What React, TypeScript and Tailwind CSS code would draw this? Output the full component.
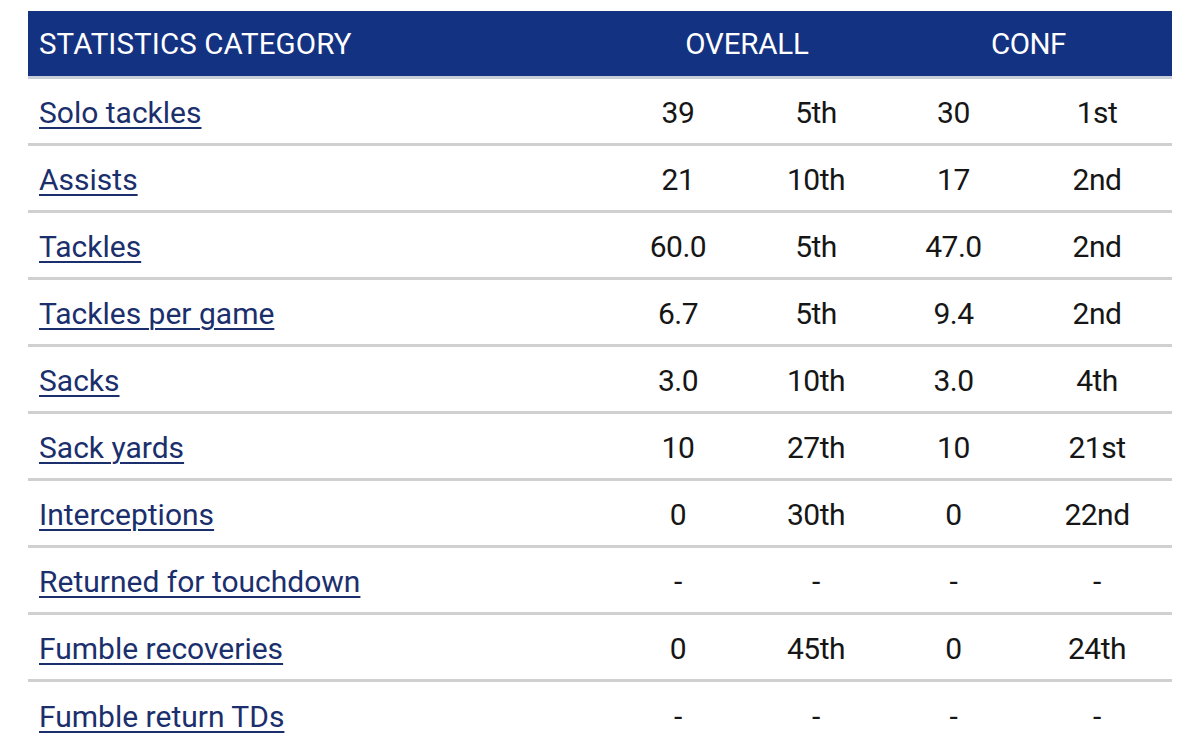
const rows = [
  { name: 'Solo tackles', ov: '39', ovRank: '5th', conf: '30', confRank: '1st' },
  { name: 'Assists', ov: '21', ovRank: '10th', conf: '17', confRank: '2nd' },
  { name: 'Tackles', ov: '60.0', ovRank: '5th', conf: '47.0', confRank: '2nd' },
  { name: 'Tackles per game', ov: '6.7', ovRank: '5th', conf: '9.4', confRank: '2nd' },
  { name: 'Sacks', ov: '3.0', ovRank: '10th', conf: '3.0', confRank: '4th' },
  { name: 'Sack yards', ov: '10', ovRank: '27th', conf: '10', confRank: '21st' },
  { name: 'Interceptions', ov: '0', ovRank: '30th', conf: '0', confRank: '22nd' },
  { name: 'Returned for touchdown', ov: '-', ovRank: '-', conf: '-', confRank: '-' },
  { name: 'Fumble recoveries', ov: '0', ovRank: '45th', conf: '0', confRank: '24th' },
  { name: 'Fumble return TDs', ov: '-', ovRank: '-', conf: '-', confRank: '-' },
];

export default function App() {
  return (
    <div className="w-[1200px] h-[754px] overflow-hidden bg-white pt-[11px] px-[28px] font-['Roboto',sans-serif]">
      <table className="w-full border-collapse table-fixed">
        <colgroup>
          <col />
          <col className="w-[138px]" />
          <col className="w-[138px]" />
          <col className="w-[137px]" />
          <col className="w-[150px]" />
        </colgroup>
        <thead>
          <tr className="h-[66px] bg-[#143282] text-white text-[29.5px] border-b-[3px] border-[#c7cdd9]">
            <th className="text-left font-normal pl-[11px] pt-[2px] tracking-[0.1px]">STATISTICS CATEGORY</th>
            <th colSpan={2} className="font-normal text-center tracking-[-0.2px] pt-[2px]">OVERALL</th>
            <th colSpan={2} className="font-normal text-center tracking-[-0.5px] pt-[2px]">CONF</th>
          </tr>
        </thead>
        <tbody>
          {rows.map((r) => (
            <tr key={r.name} className="h-[67px] border-b-[3px] border-[#d0d0d0] last:border-b-0 text-[30px]">
              <td className="pl-[11px] pt-[4px]">
                <a href="#" className="text-[#1b2f6d] underline decoration-[2px] underline-offset-[4px]">
                  {r.name}
                </a>
              </td>
              <td className="text-center text-[#161616] tracking-[-0.5px] pt-[4px]">{r.ov}</td>
              <td className="text-center text-[#161616] tracking-[-0.5px] pt-[4px]">{r.ovRank}</td>
              <td className="text-center text-[#161616] tracking-[-0.5px] pt-[4px]">{r.conf}</td>
              <td className="text-center text-[#161616] tracking-[-0.5px] pt-[4px]">{r.confRank}</td>
            </tr>
          ))}
        </tbody>
      </table>
    </div>
  );
}
